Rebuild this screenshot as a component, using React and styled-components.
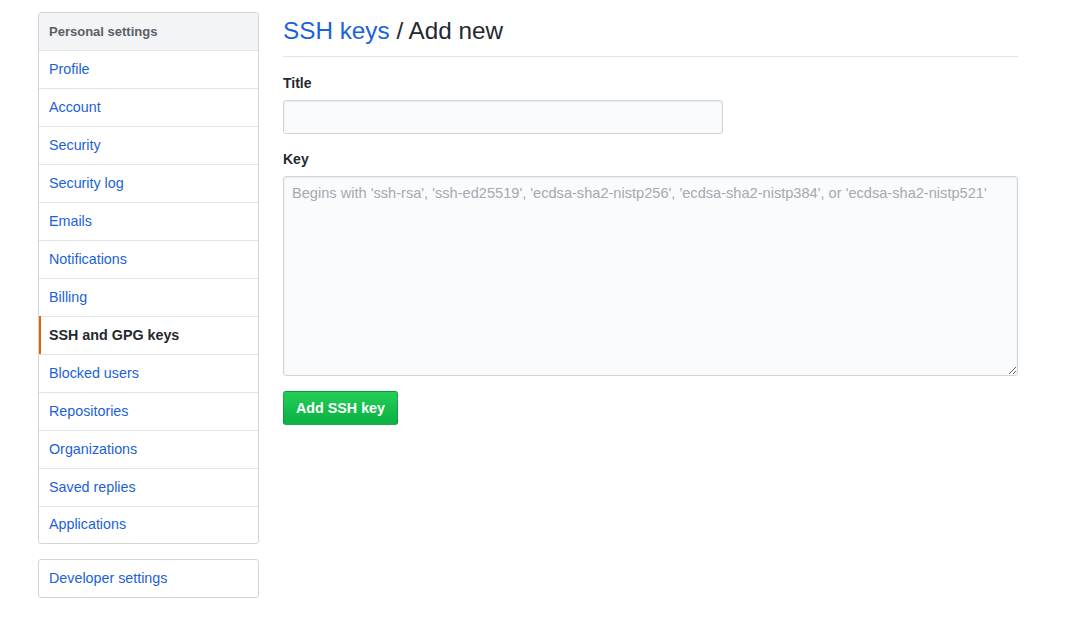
import React from "react";
import styled, { createGlobalStyle } from "styled-components";

const Global = createGlobalStyle`
  html, body { margin: 0; padding: 0; background: #fff; }
  body {
    font-family: "Liberation Sans", Arial, sans-serif;
    font-size: 14px;
    line-height: 1.5;
    color: #24292e;
  }
  * { box-sizing: border-box; }
`;

const Page = styled.div`
  display: flex;
  align-items: flex-start;
  gap: 24px;
  padding: 12px 0 0 38px;
  width: 1018px;
`;

const Sidebar = styled.nav`
  width: 221px;
  flex-shrink: 0;
  display: flex;
  flex-direction: column;
  gap: 15px;
`;

const Menu = styled.div`
  border: 1px solid #d1d5da;
  border-radius: 3px;
  overflow: hidden;
  display: flex;
  flex-direction: column;
`;

const MenuHeading = styled.div`
  height: 38px;
  padding: 0 10px;
  display: flex;
  align-items: center;
  background: #f3f4f6;
  border-bottom: 1px solid #e1e4e8;
  font-size: 13px;
  font-weight: bold;
  color: #586069;
`;

const MenuItem = styled.a`
  position: relative;
  height: 38px;
  padding: 0 10px;
  display: flex;
  align-items: center;
  font-size: 14.3px;
  text-decoration: none;
  color: ${(p) => (p.$selected ? "#24292e" : "#1b62d8")};
  font-weight: ${(p) => (p.$selected ? "bold" : "normal")};
  border-bottom: 1px solid #e1e4e8;
  &:last-child {
    border-bottom: none;
    height: ${(p) => (p.$single ? "37px" : "36px")};
  }
  ${(p) =>
    p.$selected &&
    `
    &::before {
      content: "";
      position: absolute;
      left: 0;
      top: -1px;
      bottom: 0;
      width: 2px;
      background: #e36209;
    }
  `}
`;

const Main = styled.main`
  flex: 1;
  min-width: 0;
`;

const Subhead = styled.div`
  padding-bottom: 8px;
  border-bottom: 1px solid #e1e4e8;
  margin-bottom: 16px;
`;

const Heading = styled.h2`
  margin: 0;
  padding-top: 1px;
  font-size: 24.3px;
  font-weight: normal;
  line-height: 35px;
  color: #24292e;
`;

const HeadLink = styled.a`
  color: #1b62d8;
  text-decoration: none;
`;

const FormGroup = styled.div`
  display: flex;
  flex-direction: column;
  margin-bottom: 15px;
`;

const Label = styled.label`
  font-weight: bold;
  font-size: 14px;
  line-height: 21px;
  margin-bottom: 6px;
`;

const Input = styled.input`
  width: 440px;
  height: 34px;
  padding: 6px 8px;
  font-family: inherit;
  font-size: 14px;
  background: #fafbfc;
  border: 1px solid #d1d5da;
  border-radius: 3px;
  box-shadow: inset 0 1px 2px rgba(27, 31, 35, 0.075);
  outline: none;
`;

const TextArea = styled.textarea`
  width: 100%;
  height: 200px;
  padding: 6px 8px;
  font-family: inherit;
  font-size: 14.6px;
  line-height: 20px;
  background: #fafbfc;
  border: 1px solid #d1d5da;
  border-radius: 3px;
  box-shadow: inset 0 1px 2px rgba(27, 31, 35, 0.075);
  outline: none;
  resize: vertical;
  display: block;
  &::placeholder { color: #a3aab1; }
`;

const Button = styled.button`
  height: 34px;
  padding: 0 12px;
  font-family: inherit;
  font-size: 14.3px;
  font-weight: bold;
  color: #fff;
  background-image: linear-gradient(-180deg, #22cf57 0%, #0db344 90%);
  border: 1px solid rgba(27, 31, 35, 0.2);
  border-radius: 3px;
  cursor: pointer;
`;

const items = [
  "Profile",
  "Account",
  "Security",
  "Security log",
  "Emails",
  "Notifications",
  "Billing",
  "SSH and GPG keys",
  "Blocked users",
  "Repositories",
  "Organizations",
  "Saved replies",
  "Applications",
];

export default function App() {
  return (
    <>
      <Global />
      <Page>
        <Sidebar>
          <Menu>
            <MenuHeading>Personal settings</MenuHeading>
            {items.map((it) => (
              <MenuItem key={it} href="#" $selected={it === "SSH and GPG keys"}>
                {it}
              </MenuItem>
            ))}
          </Menu>
          <Menu>
            <MenuItem href="#" $single>
              Developer settings
            </MenuItem>
          </Menu>
        </Sidebar>
        <Main>
          <Subhead>
            <Heading>
              <HeadLink href="#">SSH keys</HeadLink> / Add new
            </Heading>
          </Subhead>
          <FormGroup>
            <Label>Title</Label>
            <Input type="text" />
          </FormGroup>
          <FormGroup>
            <Label>Key</Label>
            <TextArea placeholder="Begins with 'ssh-rsa', 'ssh-ed25519', 'ecdsa-sha2-nistp256', 'ecdsa-sha2-nistp384', or 'ecdsa-sha2-nistp521'" />
          </FormGroup>
          <Button>Add SSH key</Button>
        </Main>
      </Page>
    </>
  );
}
